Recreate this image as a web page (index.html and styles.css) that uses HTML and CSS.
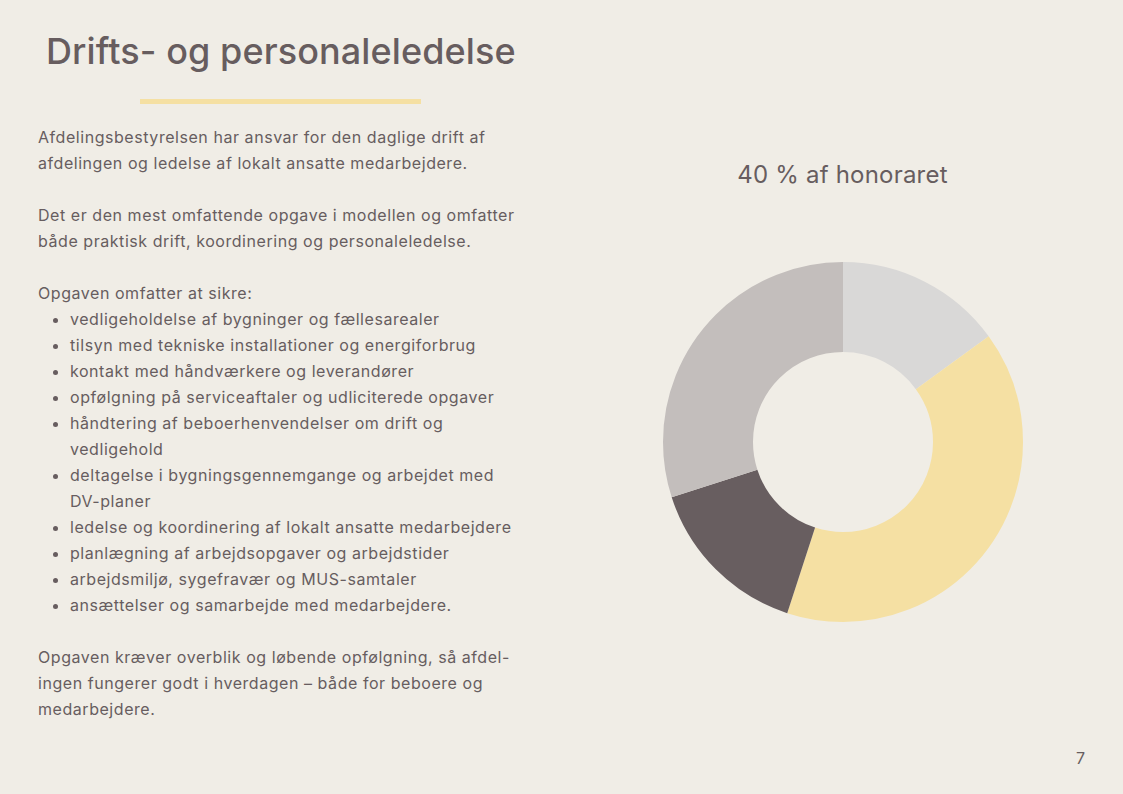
FILE: index.html
```html
<!DOCTYPE html>
<html lang="da">
<head>
<meta charset="utf-8">
<title>Drifts- og personaleledelse</title>
<link rel="stylesheet" href="styles.css">
</head>
<body>
<div class="page">
  <div class="content">
    <div class="left">
      <header class="head">
        <h1 class="title">Drifts- og personaleledelse</h1>
        <div class="rule"></div>
      </header>
      <div class="text">
        <p>Afdelingsbestyrelsen har ansvar for den daglige drift af<br>afdelingen og ledelse af lokalt ansatte medarbejdere.</p>
        <p>Det er den mest omfattende opgave i modellen og omfatter<br>både praktisk drift, koordinering og personaleledelse.</p>
        <p class="lead">Opgaven omfatter at sikre:</p>
        <ul class="list">
          <li>vedligeholdelse af bygninger og fællesarealer</li>
          <li>tilsyn med tekniske installationer og energiforbrug</li>
          <li>kontakt med håndværkere og leverandører</li>
          <li>opfølgning på serviceaftaler og udliciterede opgaver</li>
          <li>håndtering af beboerhenvendelser om drift og<br>vedligehold</li>
          <li>deltagelse i bygningsgennemgange og arbejdet med<br>DV-planer</li>
          <li>ledelse og koordinering af lokalt ansatte medarbejdere</li>
          <li>planlægning af arbejdsopgaver og arbejdstider</li>
          <li>arbejdsmiljø, sygefravær og MUS-samtaler</li>
          <li>ansættelser og samarbejde med medarbejdere.</li>
        </ul>
        <p>Opgaven kræver overblik og løbende opfølgning, så afdel-<br>ingen fungerer godt i hverdagen – både for beboere og<br>medarbejdere.</p>
      </div>
    </div>
    <div class="right">
      <h2 class="chart-title">40 % af honoraret</h2>
      <svg class="donut" width="360" height="360" viewBox="0 0 360 360" aria-hidden="true">
        <g transform="rotate(-90 180 180)" fill="none" stroke-width="90">
          <circle cx="180" cy="180" r="135" stroke="#d9d8d7" stroke-dasharray="127.23 848.23" stroke-dashoffset="0"/>
          <circle cx="180" cy="180" r="135" stroke="#f5e0a3" stroke-dasharray="339.29 848.23" stroke-dashoffset="-127.23"/>
          <circle cx="180" cy="180" r="135" stroke="#685e60" stroke-dasharray="127.23 848.23" stroke-dashoffset="-466.52"/>
          <circle cx="180" cy="180" r="135" stroke="#c3bebc" stroke-dasharray="254.47 848.23" stroke-dashoffset="-593.75"/>
        </g>
      </svg>
    </div>
  </div>
  <footer class="foot"><span class="pageno">7</span></footer>
</div>
</body>
</html>
```

FILE: styles.css
```css
html, body {
  margin: 0;
  padding: 0;
  background: #f0ede6;
}

.page {
  width: 1123px;
  height: 794px;
  box-sizing: border-box;
  display: flex;
  flex-direction: column;
  color: #675d5f;
  font-family: Inter, "Open Sans", "Liberation Sans", sans-serif;
}

.content {
  display: grid;
  grid-template-columns: 524px 1fr;
  padding-left: 38px;
}

.head {
  display: inline-flex;
  flex-direction: column;
  align-items: center;
  margin-left: 8px;
  padding-top: 28px;
}

.title {
  margin: 0;
  font-size: 36px;
  font-weight: 500;
  letter-spacing: 0.1px;
  line-height: 46px;
  color: #675d5f;
}

.rule {
  width: 281px;
  height: 5px;
  background: #f5e0a3;
  margin-top: 25px;
}

.text {
  margin-top: 20px;
  font-size: 16px;
  letter-spacing: 0.55px;
  line-height: 26px;
  white-space: nowrap;
}

.text p {
  margin: 0 0 26px;
}

.text p.lead {
  margin: 0;
}

.list {
  margin: 0 0 26px;
  padding-left: 32px;
}

.list li::marker {
  font-size: 17px;
  letter-spacing: 0;
}

.right {
  display: flex;
  flex-direction: column;
  align-items: center;
}

.chart-title {
  margin: 0;
  padding-top: 157px;
  font-size: 24px;
  font-weight: 400;
  line-height: 36px;
  letter-spacing: 0.2px;
  color: #675d5f;
}

.donut {
  display: block;
  margin-top: 69px;
}

.foot {
  margin-top: auto;
  display: flex;
  justify-content: flex-end;
  padding: 0 38px 36px 0;
}

.pageno {
  font-size: 16px;
  line-height: 20px;
}
```
